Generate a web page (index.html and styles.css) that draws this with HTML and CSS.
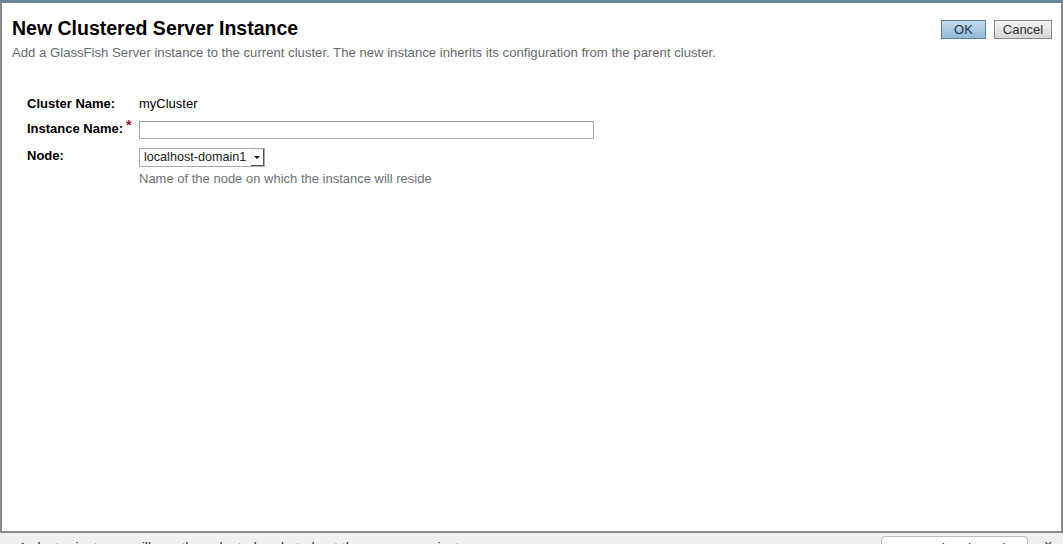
FILE: index.html
```html
<!DOCTYPE html>
<html>
<head>
<meta charset="utf-8">
<link rel="stylesheet" href="styles.css">
</head>
<body>
<div class="dialog">
  <div class="header">
    <div class="titles">
      <h1 class="title">New Clustered Server Instance</h1>
      <p class="subtitle">Add a GlassFish Server instance to the current cluster. The new instance inherits its configuration from the parent cluster.</p>
    </div>
    <div class="buttons">
      <button class="btn btn-primary">OK</button>
      <button class="btn btn-cancel">Cancel</button>
    </div>
  </div>
  <div class="form">
    <div class="row row-cluster">
      <div class="label">Cluster Name:</div>
      <div class="value">myCluster</div>
    </div>
    <div class="row row-instance">
      <div class="label">Instance Name:<span class="req">*</span></div>
      <div class="value"><input class="text-input" type="text"></div>
    </div>
    <div class="row row-node">
      <div class="label">Node:</div>
      <div class="value">
        <div class="select"><span class="select-text">localhost-domain1</span><span class="select-arrow"></span></div>
        <div class="help">Name of the node on which the instance will reside</div>
      </div>
    </div>
  </div>
</div>
<div class="below">
  <div class="below-text">A cluster instance will use the selected node to host the new server instance</div>
  <div class="below-btn">Launch selected</div>
  <div class="below-x">×</div>
</div>
</body>
</html>
```
FILE: styles.css
```css
html, body {
  margin: 0;
  padding: 0;
}
body {
  width: 1063px;
  height: 544px;
  overflow: hidden;
  background: #f0efed;
  font-family: "Liberation Sans", Arial, sans-serif;
  color: #000;
}
.dialog {
  box-sizing: border-box;
  width: 1063px;
  height: 533px;
  background: #fff;
  border-top: 3px solid #6b8599;
  border-left: 2px solid #8a8a8a;
  border-right: 2px solid #8a8a8a;
  border-bottom: 2px solid #8a8a8a;
}
.header {
  display: flex;
  justify-content: space-between;
  padding: 13px 9px 0 10px;
}
.title {
  margin: 0;
  font-size: 19.5px;
  line-height: 24px;
  font-weight: bold;
  color: #000;
}
.subtitle {
  margin: 5px 0 0 0;
  font-size: 13.15px;
  line-height: 15px;
  color: #666a6e;
}
.buttons {
  display: flex;
  gap: 8px;
  padding-top: 4px;
  align-items: flex-start;
}
.btn {
  box-sizing: border-box;
  height: 19px;
  padding: 0;
  font-family: "Liberation Sans", Arial, sans-serif;
  font-size: 13px;
  line-height: 17px;
  color: #333;
  border: 1px solid #888;
  background: linear-gradient(#f4f4f4, #d6d6d6);
  border-radius: 0;
  margin: 0;
  text-align: center;
}
.btn-primary {
  width: 45px;
  border-color: #5e7f99;
  background: linear-gradient(#c4dbec, #92b9d8);
  color: #243848;
}
.btn-cancel {
  width: 58px;
}
.form {
  padding: 34px 0 0 25px;
}
.row {
  display: flex;
}
.label {
  width: 112px;
  flex: none;
  font-size: 13px;
  font-weight: bold;
  line-height: 15px;
  position: relative;
}
.value {
  font-size: 13px;
  line-height: 15px;
}
.row-cluster .label, .row-cluster .value {
  padding-top: 2px;
}
.row-instance {
  margin-top: 10px;
}
.row-instance .label {
  padding-top: 0;
}
.req {
  color: #a3152a;
  font-weight: bold;
  font-size: 14px;
  position: absolute;
  left: 99px;
  top: -3px;
}
.text-input {
  box-sizing: border-box;
  display: block;
  width: 455px;
  height: 18px;
  margin: 0;
  border: 1px solid #aaa;
  border-top-color: #999;
  padding: 0 3px;
  font-family: "Liberation Sans", Arial, sans-serif;
  font-size: 13px;
}
.row-node {
  margin-top: 9px;
}
.row-node .label {
  padding-top: 0;
}
.select {
  box-sizing: border-box;
  display: inline-flex;
  align-items: center;
  width: 126px;
  height: 19px;
  border: 1px solid #aaa;
  background: #fff;
  vertical-align: top;
}
.select-text {
  flex: 1;
  padding-left: 4px;
  font-size: 12.6px;
  color: #222;
  white-space: nowrap;
}
.select-arrow {
  box-sizing: border-box;
  width: 13px;
  height: 17px;
  background: #fff;
  position: relative;
  box-shadow: inset -1px -1px 0 #555, inset 1px 1px 0 #eee;
}
.select-arrow::after {
  content: "";
  position: absolute;
  left: 3px;
  top: 7px;
  border-left: 3px solid transparent;
  border-right: 3px solid transparent;
  border-top: 3px solid #111;
}
.help {
  margin-top: 4px;
  font-size: 13px;
  line-height: 15px;
  color: #6d7277;
}
.below {
  display: flex;
  align-items: flex-start;
  height: 11px;
  overflow: hidden;
}
.below-text {
  margin-top: 7px;
  padding-left: 18px;
  font-size: 14px;
  color: #333;
  width: 860px;
  white-space: nowrap;
}
.below-btn {
  box-sizing: border-box;
  margin-top: 3px;
  margin-left: 3px;
  width: 147px;
  height: 24px;
  border: 1px solid #bbb;
  border-radius: 4px;
  background: #fff;
  font-size: 14px;
  text-align: center;
  padding-top: 4px;
  color: #333;
}
.below-x {
  margin-top: 4px;
  margin-left: 16px;
  font-size: 14px;
  color: #333;
}
```
